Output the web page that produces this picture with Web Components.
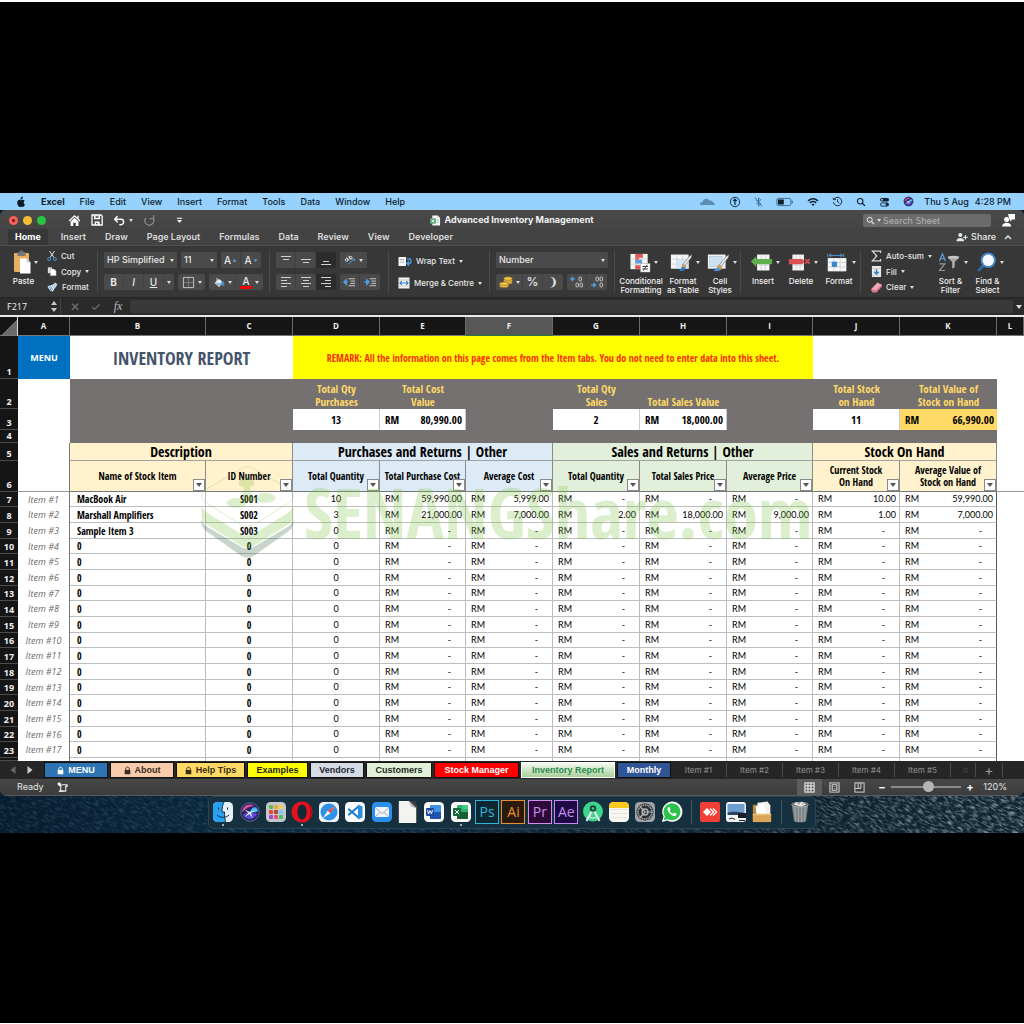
<!DOCTYPE html>
<html lang="en">
<head>
<meta charset="utf-8">
<title>Advanced Inventory Management</title>
<style>
  html { background: #fff; }
  body {
    margin: 0;
    --ui: Inter, "Liberation Sans", sans-serif;
    --cell: "Open Sans Condensed", "Liberation Sans Narrow", "Noto Sans", sans-serif;
    --num: Lato, "Open Sans", sans-serif;
    --head: "Open Sans", "Noto Sans", sans-serif;
    font-family: var(--ui);
    font-size: 9px;
    line-height: 12px;
  }
</style>
</head>
<body>
<desktop-stage>
  <mac-menubar></mac-menubar>
  <excel-window>
    <title-bar heading="Advanced Inventory Management"></title-bar>
    <ribbon-tabs></ribbon-tabs>
    <tool-ribbon></tool-ribbon>
    <formula-bar cell="F217"></formula-bar>
    <stock-sheet></stock-sheet>
    <sheet-tabs></sheet-tabs>
    <status-bar></status-bar>
  </excel-window>
  <mac-dock slot="dock"></mac-dock>
</desktop-stage>

<script>
const RESET = `
  *, *::before, *::after { box-sizing: border-box; }
  :host { display: block; font-family: var(--ui); }
  button, input, select { font: inherit; color: inherit; background: none; border: 0; padding: 0; margin: 0; border-radius: 0; appearance: none; outline: none; }
  button { display: inline-flex; align-items: center; justify-content: center; }
  a { color: inherit; text-decoration: none; }
`;
function define(name, css, html, after) {
  customElements.define(name, class extends HTMLElement {
    connectedCallback() {
      if (this.shadowRoot) return;
      const root = this.attachShadow({ mode: 'open' });
      root.innerHTML = `<style>${RESET}${css}</style>` + (typeof html === 'function' ? html(this) : html);
      if (after) after(root, this);
    }
  });
}

/* ---------- icon set: [viewBox, markup] ---------- */
const sheetGrid = (x, y, w, h) => `<rect x="${x}" y="${y}" width="${w}" height="${h}" fill="#f7f7f7"/><path d="M${x} ${y + h / 3}h${w}M${x} ${y + 2 * h / 3}h${w}M${x + w / 3} ${y}v${h}M${x + 2 * w / 3} ${y}v${h}" stroke="#c4c8cc" stroke-width=".8"/>`;
const lines = (a, c = '#d0d0d0') => `<path d="${a}" stroke="${c}" stroke-width="1" fill="none"/>`;
const tile = (bg, inner) => `<rect x="1" y="1" width="20" height="20" rx="4.5" fill="${bg}"/>${inner}`;
const ICONS = {
  apple: ['0 0 14 16', '<path fill="#0a1a2c" d="M9.3 3.6c.6-.8 1-1.800.9-2.800-.9.100-1.900.6-2.500 1.400-.6.7-1 1.700-.9 2.600 1 .1 1.900-.5 2.500-1.200zM11.300 8.500c0-1.500 1.200-2.200 1.300-2.300-.7-1.100-1.900-1.200-2.300-1.200-1-.1-1.900.6-2.400.6s-1.300-.6-2.100-.5C4.700 5.100 3.700 5.700 3.100 6.600c-1.100 2-.3 4.900.8 6.500.6.800 1.200 1.700 2 1.600.8 0 1.100-.5 2.100-.5s1.300.5 2.100.5c.9 0 1.500-.8 2-1.600.600-.9.900-1.800.9-1.800s-1.700-.700-1.700-2.800z"/>'],
  cloud: ['0 0 18 10', '<path fill="#5b8cb4" d="M1 9C0 6.500 2 5.500 3.500 5.500 4.500 1.500 9 .5 11 4c3-.6 4 1 4 2 2 0 2.500 2 2 3z"/>'],
  upcircle: ['0 0 12 12', '<g fill="none" stroke="#12324d" stroke-width="1"><circle cx="6" cy="6" r="4.700"/><path d="M6 9V3.200M4.200 5L6 3.200 7.800 5" stroke-width="1.300"/></g>'],
  bluetooth: ['0 0 10 12', '<path d="M2.500 3.500l5 5L5 10.500v-9L7.500 3.500l-5 5M1 1l8 10" fill="none" stroke="#3c6a90" stroke-width="1"/>'],
  battery: ['0 0 20 10', '<rect x="1" y="1" width="15.500" height="8" rx="1.800" fill="none" stroke="#2f5876" stroke-width=".9"/><rect x="2.200" y="2.200" width="6.500" height="5.600" fill="#10202f"/><path d="M18 3.500v3" stroke="#2f5876" stroke-width="1.200"/>'],
  wifi: ['0 0 14 11', '<g fill="none" stroke="#0e2235" stroke-width="1.700"><path d="M1.200 4.200Q7-.8 12.800 4.200M3.300 6.500Q7 3.500 10.700 6.500"/></g><path d="M5 8.200Q7 6.800 9 8.200L7 10.300z" fill="#0e2235"/>'],
  clock: ['0 0 12 12', '<path d="M2 3.800a4.600 4.600 0 1 1-.5 3M1.200 2l.8 2.200L4.200 3.700M6 3.500V6.300L8 7.500" fill="none" stroke="#0e2235" stroke-width="1"/>'],
  magnify: ['0 0 12 12', '<circle cx="5" cy="5" r="3.300" fill="none" stroke="currentColor" stroke-width="1.300"/><path d="M7.500 7.500L10.700 10.700" stroke="currentColor" stroke-width="1.500"/>'],
  control: ['0 0 12 11', '<rect x="1" y="1" width="10" height="4" rx="2" fill="#0e2235"/><circle cx="3.200" cy="3" r="1.100" fill="#97d0fc"/><rect x="1.500" y="6.500" width="9" height="3.500" rx="1.700" fill="none" stroke="#0e2235"/><circle cx="8.700" cy="8.200" r="1.500" fill="#0e2235"/>'],
  siri: ['0 0 22 22', '<circle cx="11" cy="11" r="9.700" fill="#26265c"/><circle cx="11" cy="11" r="9.300" fill="none" stroke="#6e7fae" stroke-width=".7"/><path d="M3 11C4 4 11 1.500 15 5c-4 0-8 2-12 6z" fill="#e0509a"/><path d="M19 10c-1-5-6-5-8 1 3 0 6 1 8-1z" fill="#4ab6f2"/><path d="M4 14c3-3 8-4 14-1-3 6-10 7-14 1z" fill="#5a4ed4"/><path d="M5 8.500l6 2.500 6-2-5 3 1.500 5-3-4-5 3 4-4z" fill="#fff" opacity=".9"/>'],
  home: ['0 0 14 14', '<path d="M1.200 7.500L7 2l5.800 5.500M10.800 2v3" fill="none" stroke="#fff" stroke-width="1.400"/><path d="M2.800 8L7 4.100 11.200 8v5H8.400V9.300H5.600V13H2.800z" fill="#fff"/>'],
  save: ['0 0 12 12', '<path d="M1 1h9l1.200 1.200V11H1z" fill="none" stroke="#fff" stroke-width="1.300"/><path d="M3 1.500h6v3.800H3zM3.600 7.500h5V11H6.500V9H5v2H3.600z" fill="#fff"/><path d="M4.500 2.200h3v1.500h-3z" fill="#3c3c3c"/>'],
  undo: ['0 0 14 12', '<path d="M5 1.200L1.700 4.600 5 8M2 4.600h6.500c4 0 4 6 0 6H6.800" fill="none" stroke="#fff" stroke-width="1.500"/>'],
  redo: ['0 0 14 14', '<path d="M3 4.200a4.800 4.800 0 1 0 7.800.3M11.500 1v4H7" fill="none" stroke="#8c8c8c" stroke-width="1.300"/>'],
  customise: ['0 0 8 8', '<path d="M1 1.500h6" stroke="#fff" stroke-width="1.200"/><path d="M1.200 3.500h5.600L4 6.800z" fill="#fff"/>'],
  doc: ['0 0 12 12', '<path d="M2.500.5h6L11 3v8.500H2.500z" fill="#f3f6f2"/><path d="M8.500.5V3H11z" fill="#bcc4bc"/><rect x="0" y="3.500" width="6.500" height="6" rx="1" fill="#5fa87c"/><path d="M2 5l2.600 3M4.600 5L2 8" stroke="#fff" stroke-width=".9"/><path d="M7.500 5.500h2M7.500 8h2" stroke="#8abf9d"/>'],
  presence: ['0 0 14 14', '<circle cx="5" cy="6" r="2.700" fill="#fff"/><path d="M0 13.500C0 8 10 8 10 13.500z" fill="#fff"/><path d="M6.500 0H14v6h-3L8.600 8V6H8z" fill="#fff"/>'],
  share: ['0 0 14 11', '<circle cx="5" cy="3.200" r="2.400" fill="#e8e8e8"/><path d="M.5 10.500C.5 5.500 9.500 5.500 9.500 10.500z" fill="#e8e8e8"/><path d="M11 3.500v5M8.500 6h5" stroke="#e8e8e8" stroke-width="1.300"/>'],
  chevron: ['0 0 8 6', '<path d="M1 5l3-3 3 3" fill="none" stroke="#eee" stroke-width="1.300"/>'],
  paste: ['0 0 18 24', '<rect x="1" y="3" width="15" height="19" rx="1.200" fill="#e8b062"/><path d="M4.500 2.200h2C6.500 0 10.500 0 10.500 2.200h2V6h-8z" fill="#74777b"/><path d="M7 8.500h6.500l4 4V23.500H7z" fill="#fff"/><path d="M13.500 8.500l4 4h-4z" fill="#cfcfcf"/>'],
  cut: ['0 0 12 14', '<path d="M3 1l5.500 8M9 1L3.500 9" stroke="#e6e6e6" stroke-width="1.200"/><g fill="none" stroke="#4a92d8" stroke-width="1.200"><circle cx="2.600" cy="10.700" r="1.800"/><circle cx="9.400" cy="10.700" r="1.800"/></g>'],
  copy: ['0 0 12 12', '<path d="M1 1h5v7H1z" fill="#ddd"/><path d="M4 3h4.500L11 5.500V11H4z" fill="#fff" stroke="#888" stroke-width=".4"/>'],
  brush: ['0 0 12 12', '<path d="M0 5l5-1.500 3.500 4-2 4C4 11.500 1 8 0 5z" fill="#f0f0f0"/><path d="M1.500 5.500l3.500 5M3.500 5l3 4.500" stroke="#4a92d8" stroke-width="1.200"/><path d="M5 4l4.500-3.500L12 3 8.500 8z" fill="#bcd6ee"/>'],
  growA: ['10 1 6 8', '<path d="M10.500 7l2.500-3.500L15.500 7z" fill="#4f9fe8"/>'],
  shrinkA: ['10 1 6 8', '<path d="M10.500 4h5L13 7.500z" fill="#4f9fe8"/>'],
  border: ['0 0 14 14', '<path d="M1.500 1.500h11v11h-11z" fill="none" stroke="#ccc" stroke-width="1"/><path d="M7 2v10M2 7h10" stroke="#888" stroke-width=".8"/>'],
  fillcolor: ['1 0 12 10', '<path d="M2.500 5.500L7 1.500 11.500 5 7 9.500z" fill="#eef2f6"/><path d="M2.500 5.500c2-.5 4 .5 9-.5L7 9.500z" fill="#9fb6c9"/><path d="M9.500 3c2.500 1 3.300 3 2.800 5.500-1.300 0-2.800-1-2.800-2z" fill="#3f8fdc"/><path d="M5 4V.5" stroke="#ddd"/>'],
  top: ['0 0 12 12', lines('M1 2.500h10M3 5.500h6')],
  middle: ['0 0 12 12', lines('M1 5.500h10M3 8.500h6')],
  bottom: ['0 0 12 12', lines('M3 7.500h6M1 10.500h10')],
  left: ['0 0 12 12', lines('M1 1.500h10M1 4.500h6M1 7.500h10M1 10.500h6')],
  center: ['0 0 12 12', lines('M1 1.500h10M3 4.500h6M1 7.500h10M3 10.500h6')],
  right: ['0 0 12 12', lines('M1 1.500h10M5 4.500h6M1 7.500h10M5 10.500h6')],
  outdent: ['0 0 14 10', lines('M6 1.500h7M8 4h5M8 6.500h5M6 9h7') + '<path d="M5 5H1.500M3.500 2.500L1 5l2.500 2.500z" stroke="#4f9fe8" stroke-width="1.400" fill="#4f9fe8"/>'],
  indent: ['0 0 14 10', lines('M6 1.500h7M8 4h5M8 6.500h5M6 9h7') + '<path d="M.5 5h3M3 2.500L5.500 5 3 7.500z" stroke="#4f9fe8" stroke-width="1.400" fill="#4f9fe8"/>'],
  orient: ['0 0 14 12', '<g fill="none" stroke="#eee" stroke-width="1"><circle cx="3.200" cy="6" r="1.600"/><path d="M3 3l3 3.500M5 1l3.500 4.200"/><circle cx="7.800" cy="3.300" r="1.600"/></g><path d="M5 11L12 5M12.300 4.500v3M12.300 4.800l-3 .2" stroke="#4f9fe8" stroke-width="1"/>'],
  wrap: ['0 0 14 10', '<path d="M.5.500H8V9.500H.5z" fill="#f8f8f8"/>' + lines('M2 3h4M2 5.500h4', '#aaa') + '<path d="M9 2.500h2.500c2 0 2 4.500 0 4.500H9.500M11 4.800L9 7l2 2" fill="none" stroke="#4f9fe8" stroke-width="1.300"/>'],
  merge: ['0 0 12 12', '<rect x=".5" y=".5" width="11" height="11" fill="#f5f5f5"/><path d="M.5 3h11M.5 9h11" stroke="#b6b6b6" stroke-width=".7"/><path d="M2 6h8M3.800 4.200L2 6l1.800 1.800M8.200 4.200L10 6 8.200 7.800" fill="none" stroke="#2f7fd2" stroke-width="1.200"/>'],
  coins: ['0 0 14 12', '<g fill="#efc04c" stroke="#8a6418" stroke-width=".5"><ellipse cx="9" cy="6.200" rx="4.300" ry="1.900"/><ellipse cx="9" cy="4.400" rx="4.300" ry="1.900"/><ellipse cx="9" cy="2.600" rx="4.300" ry="1.900"/><ellipse cx="5" cy="9.700" rx="4.500" ry="1.900"/><ellipse cx="5" cy="7.800" rx="4.500" ry="1.900"/></g>'],
  decinc: ['0 0 14 12', '<path d="M1 3h4M3 1L1 3l2 2" fill="none" stroke="#4f9fe8" stroke-width="1.400"/><g fill="none" stroke="#ccc" stroke-width=".9"><rect x="9" y="1" width="2.500" height="4" rx="1"/><rect x="6" y="7" width="2.500" height="4" rx="1"/><rect x="10" y="7" width="2.500" height="4" rx="1"/></g>'],
  decdec: ['0 0 14 12', '<path d="M1 9h4M3.500 7l2 2-2 2" fill="none" stroke="#4f9fe8" stroke-width="1.400"/><g fill="none" stroke="#ccc" stroke-width=".9"><rect x="10" y="7" width="2.500" height="4" rx="1"/><rect x="6" y="1" width="2.500" height="4" rx="1"/><rect x="10" y="1" width="2.500" height="4" rx="1"/></g>'],
  cond: ['0 0 22 22', sheetGrid(1, 2, 18, 16) + '<path d="M6 2h8v4H6zM6 14h6v4H6z" fill="#e0565b"/><path d="M6 8h7v4H6z" fill="#5b9be0"/><path d="M6 6h4v2H6z" fill="#e0565b"/><rect x="11.500" y="12" width="10" height="9" fill="#fff" stroke="#999" stroke-width=".5"/><path d="M13.500 15.200h6M13.500 17.800h6M18.500 13.500l-4 6" stroke="#333" stroke-width="1"/>'],
  astable: ['0 0 26 22', sheetGrid(1, 2, 20, 16) + '<path d="M7 8h14v10H7z" fill="#d4e4f4"/><path d="M14 14l8-10 3-2-1 3.500-8 10z" fill="#eee" stroke="#555" stroke-width=".6"/><path d="M15.500 14.500l2.500 2.500c-1 3-4 4-8 3.500 2.500-1 2.500-4.500 5.500-6z" fill="#2f7fd2"/><path d="M14.500 13.500l3 3" stroke="#d89a40" stroke-width="2.500"/>'],
  styles: ['0 0 26 22', '<rect x="1" y="2" width="20" height="16" fill="#f1f4f8"/><rect x="3" y="4" width="14" height="12" fill="#cfe0f2" stroke="#8aa" stroke-width=".4"/><path d="M14 14l8-10 3-2-1 3.500-8 10z" fill="#eee" stroke="#555" stroke-width=".6"/><path d="M13.500 15l3 3c-1 2.500-5 3-9.500 2.500 3-1 3.500-4 6.500-5.500z" fill="#4d96df"/><path d="M12.500 14l4 4" stroke="#d89a40" stroke-width="3"/>'],
  insert: ['0 0 26 22', sheetGrid(8, 2, 14, 18) + '<path d="M7 7h18v6H7v3L1 10l6-6z" fill="#5eb04f"/>'],
  remove: ['0 0 26 22', sheetGrid(5, 2, 13, 18) + '<path d="M1 7h15l3 3-3 3H1z" fill="#dc4f50"/><path d="M19.500 7l5 5.500M24.500 7l-5 5.500" stroke="#dc4f50" stroke-width="1.800"/>'],
  cellfmt: ['0 0 26 22', sheetGrid(2, 6, 21, 15) + '<rect x="6.500" y="10" width="6" height="6" fill="#3f86d2"/><path d="M2 1v4M20 1v4M3.500 3h15M6 1L3.500 3 6 5M16 1l2.500 2L16 5" fill="none" stroke="#5a9fe0" stroke-width="1"/>'],
  sigma: ['0 0 12 13', '<path d="M10.500 3.300V1.200H1.500L6.300 6.500 1.500 11.800h9V9.700" fill="none" stroke="#ddd" stroke-width="1.300"/>'],
  filldown: ['0 0 12 12', '<rect x="1" y="0" width="10" height="12" fill="#eee"/><path d="M1 2.500h10M1 10h10" stroke="#aaa" stroke-width=".6"/><path d="M6 3.500v5M3.500 6.300L6 8.800l2.500-2.500" fill="none" stroke="#2f7fd2" stroke-width="1.600"/>'],
  eraser: ['0 0 12 12', '<path d="M0 8l7-7.500 5 2.500L6 11H2z" fill="#f3a5b6"/><path d="M0 8l5.500 1L12 3v2L6 11.500H1.500z" fill="#d9748c"/>'],
  sort: ['0 0 26 22', '<path d="M1.500 9.500L5 1l3.500 8.500M2.700 6.800h4.600" fill="none" stroke="#5fa2e4" stroke-width="1.300"/><path d="M1.800 12.500h6l-6 7.500h6.300" fill="none" stroke="#9a9a9a" stroke-width="1.300"/><path d="M11 4.500h13c0 3-5 4-5 7v5l-3 1.500v-6.500c0-3-5-4-5-7z" fill="#a8a8a8"/><ellipse cx="17.500" cy="5" rx="6.500" ry="1.600" fill="#c8c8c8"/>'],
  find: ['0 0 24 24', '<path d="M9 15l-6.500 6.500" stroke="#2f6faf" stroke-width="3"/><circle cx="14" cy="9.500" r="7.700" fill="#f5f9fc" stroke="#3f86c4" stroke-width="2.200"/>'],
  lock: ['0 0 8 10', '<path d="M2 5V3.200C2 .5 6 .5 6 3.200V5" fill="none" stroke="currentColor" stroke-width="1.100"/><rect x=".8" y="4.500" width="6.400" height="4.800" rx=".6" fill="currentColor"/>'],
  prev: ['0 0 6 8', '<path d="M5.500 0v8L.5 4z" fill="#666"/>'],
  next: ['0 0 6 8', '<path d="M.5 0v8l5-4z" fill="#ccc"/>'],
  macro: ['0 0 12 12', '<path d="M5 3h6v1.800H9.500V10H2.500" fill="none" stroke="#eee" stroke-width="1.200"/><path d="M4 1.500V10M2 4h3M2 10h5" stroke="#eee" stroke-width="1.200"/><circle cx="2.200" cy="2.200" r="1.600" fill="#fff"/>'],
  normal: ['0 0 12 12', '<rect x="1" y="1" width="10" height="10" fill="none" stroke="#fff"/><path d="M1 4.300h10M1 7.600h10M4.300 1v10M7.600 1v10" stroke="#fff" stroke-width="1"/>'],
  layout: ['0 0 12 12', '<rect x="1" y="1" width="10" height="10" fill="none" stroke="#ddd"/><rect x="3.500" y="3" width="5" height="6" fill="none" stroke="#ddd"/><path d="M2 3v6M10 3v6M5 5h2M5 7h2" stroke="#999"/>'],
  breaks: ['0 0 12 12', '<rect x="1" y="1" width="10" height="10" fill="none" stroke="#ddd"/><path d="M1 7h6.500V1M4.500 1v6" fill="none" stroke="#ddd"/>'],
  finder: ['0 0 22 22', tile('#e4eff8', '<path d="M5.500 1H12c-1.500 3-2 6-2 10h2.500c0 4 .2 7 1 10H5.500A4.500 4.500 0 0 1 1 16.500v-11A4.500 4.500 0 0 1 5.500 1z" fill="#29a0f0"/><path d="M6.500 6.500v2.300M15.500 6.500v2.300M5 14c3.500 3.200 8.500 3.200 12 0M12 1c-1.500 3-2 6-2 10h2.500c0 4 .2 7 1 10" fill="none" stroke="#14304c" stroke-width="1"/>')],
  launchpad: ['0 0 22 22', tile('#c3c8cc', [['#5cc04e', 4, 4], ['#f0a63c', 9, 4], ['#f2d14a', 14, 4], ['#e8453c', 4, 9], ['#b9442e', 9, 9], ['#7fcaf0', 14, 9], ['#a24bd0', 4, 14], ['#ea4b78', 9, 14], ['#46bf5e', 14, 14]].map(c => `<rect x="${c[1]}" y="${c[2]}" width="4" height="4" rx=".8" fill="${c[0]}"/>`).join(''))],
  opera: ['0 0 24 24', '<circle cx="12" cy="12" r="11.500" fill="#e3121f"/><ellipse cx="12" cy="12" rx="5" ry="8.300" fill="#12293a"/><path d="M18 2.500a11.500 11.500 0 0 1 0 19c4-4 4-15 0-19z" fill="#a8101a"/>'],
  safari: ['0 0 22 22', tile('#f1f4f6', '<circle cx="11" cy="11" r="8.500" fill="#2f92ea"/><path d="M17 5l-4.700 7.300L5 17l4.700-7.300z" fill="#fff"/><path d="M17 5L9.700 9.700l2.600 2.600z" fill="#e8443a"/>')],
  vscode: ['0 0 22 22', tile('#fdfdfd', '<path d="M14.500 5.500L5 13.500M14.500 16.500L5 8.500" stroke="#1f7fc8" stroke-width="2.200" stroke-linecap="round"/><path d="M14 3.500l4.500 2v11l-4.500 2z" fill="#2a8fdc"/>')],
  mail: ['0 0 22 22', tile('#2b8ff0', '<rect x="4" y="6" width="14" height="10" rx="1.500" fill="#f1f5f8"/><path d="M4.500 7l6.500 5.500L17.500 7M4.500 15.500l4.500-4M17.500 15.500l-4.500-4" fill="none" stroke="#98a4ae" stroke-width=".9"/>')],
  libre: ['0 0 22 24', '<path d="M1 0h13l6 6v18H1z" fill="#f3f3f2"/><path d="M12 0h8v8z" fill="#3a3e42"/><path d="M12 0l2 6 6 2z" fill="#b9bcbe"/>'],
  word: ['0 0 22 22', tile('#fafafa', '<rect x="7" y="4" width="11" height="14" rx="1" fill="#3f93e0"/><path d="M7 11h11v6a1 1 0 0 1-1 1H7z" fill="#1d55ad"/><rect x="3" y="7" width="8" height="8" rx="1" fill="#1a4b9e"/><path d="M4.500 9l1 4L7 9.500 8.500 13l1-4" fill="none" stroke="#fff" stroke-width=".9"/>')],
  excel: ['0 0 22 22', tile('#fafafa', '<rect x="7" y="4" width="11" height="14" rx="1" fill="#2fb070"/><path d="M7 11h11v6a1 1 0 0 1-1 1H7z" fill="#17613a"/><path d="M12.500 4H17a1 1 0 0 1 1 1v3h-5.500z" fill="#42cf8a"/><rect x="3" y="7" width="8" height="8" rx="1" fill="#14683b"/><path d="M5 9l4 4M9 9l-4 4" fill="none" stroke="#fff" stroke-width="1"/>')],
  studio: ['0 0 22 22', '<circle cx="11" cy="10.500" r="10" fill="#3dd58a"/><path d="M11 8L4.500 20M11 8l6.500 12" stroke="#e8eef2" stroke-width="2"/><path d="M6 15c3 2.500 7 2.500 10 0" fill="none" stroke="#dfe7ec" stroke-width="1.300"/><circle cx="11" cy="7.500" r="3.300" fill="#1b4a48"/><circle cx="11" cy="7.500" r="1.200" fill="#3dd58a"/>'],
  notes: ['0 0 22 22', tile('#f7f6f1', '<path d="M5.500 1h11A4.500 4.500 0 0 1 21 5.500V7H1V5.500A4.500 4.500 0 0 1 5.500 1z" fill="#fbc81f"/><path d="M1 8.500h20M3 12.500h16M3 16.500h16" stroke="#d4d2ca" stroke-width=".5"/>')],
  prefs: ['0 0 22 22', tile('#9ea3a7', '<circle cx="11" cy="11" r="8.500" fill="#2b2e31"/><circle cx="11" cy="11" r="7" fill="none" stroke="#a9adb0" stroke-width="1.600" stroke-dasharray="1.200 .6"/><circle cx="11" cy="11" r="3" fill="none" stroke="#b4b8bb" stroke-width="1.300"/><path d="M11 11L6 5.500M11 11h7.500M11 11l-5 5.500" stroke="#b4b8bb" stroke-width="1.200"/>')],
  whatsapp: ['0 0 24 24', '<path d="M1 23l1.700-6A11 11 0 1 1 7 21.300z" fill="#fff"/><path d="M3 21l1.200-4.300A9.200 9.200 0 1 1 7.500 19.800z" fill="#2cc24b"/><path d="M8.300 6.500c-2 1-1.500 4 1.500 7s6 3.800 7 1.800c.4-1-.3-1.500-2.300-2.400-1 .2-1 1.300-1.800 1-1.700-.8-2.500-1.800-3.200-3.200.2-.8 1-.9.7-1.900-.6-1.500-.9-2.400-1.900-2.300z" fill="#fff"/>'],
  anydesk: ['0 0 22 22', '<rect x="1" y="1" width="20" height="20" rx="2" fill="#ee4035"/><path d="M8 7l4 4-4 4-4-4z" fill="#fff"/><path d="M11 7.500l3.500 3.500-3.500 3.500M14 7.500l3.500 3.500-3.500 3.500" fill="none" stroke="#fff" stroke-width="1.300"/>'],
  photos: ['0 0 22 22', '<rect x="1" y="1" width="20" height="20" rx="3" fill="#f2f5f7"/><rect x="2.500" y="3" width="17" height="9" fill="#6d9fd2"/><path d="M2.500 12c4-2 9-1 17 0v2h-17z" fill="#2d4560"/><rect x="13" y="12" width="8" height="5" fill="#1c1f22"/><path d="M4 18l3-1 3 1.500M14 19.500h6" stroke="#222"/>'],
  folder: ['0 0 22 24', '<path d="M1 4h8l1 2h10v16H1z" fill="#b98a43"/><path d="M6 2l11-1.500 3 4V15H6z" fill="#f2f2ef"/><path d="M4 6l9-3 3 12H5z" fill="#fff"/><path d="M1 14h20v9H1z" fill="#dba756"/><path d="M1 14h20v1.500H1z" fill="#ecc27b"/>'],
  trash: ['0 0 22 24', '<path d="M2 3.500h18L17.500 22c-2 1.500-11 1.500-13 0z" fill="#7f8487"/><path d="M5 5l1.500 17M9 5.500L9.500 23M13 5.500L12.500 23M17 5l-1.500 17" stroke="#a9aeb1" stroke-width=".9"/><ellipse cx="11" cy="4" rx="9" ry="2.500" fill="#4b5053" stroke="#c3c7c9" stroke-width=".8"/><path d="M4 4l3-3 3 2 3-2.500L18 4l-6 2z" fill="#e9ecec"/><path d="M8 2l2 2M13 2l1 2" stroke="#a33" stroke-width=".7"/>']
};
define('ui-icon', ':host{display:inline-block;flex:none;width:var(--w,12px);height:var(--h,12px)}svg{display:block;width:100%;height:100%}',
  el => { const i = ICONS[el.getAttribute('name')]; return `<svg viewBox="${i[0]}" fill="none" aria-hidden="true">${i[1]}</svg>`; });
const icon = (n, w = 12, h = 12) => `<ui-icon name="${n}" style="--w:${w}px;--h:${h}px"></ui-icon>`;
const CARET = '.caret{display:inline-block;flex:none;width:0;height:0;border:2px solid transparent;border-top:3px solid #ddd;border-bottom:0;}';
const caret = '<span class="caret"></span>';

/* ---------- stage: letterboxed desktop ---------- */
define('desktop-stage', `
  :host { padding: 2px 0 1px; background: #fff; }
  .frame { background: #000; padding: 191px 0 190px; }
  .screen { position: relative; background: #0b2538; overflow: hidden; }
  .sea { display: block; width: 100%; height: 37px; position: relative; }
  .sea svg { display: block; width: 100%; height: 37px; }
  .dock { position: absolute; inset: 0; display: flex; justify-content: center; align-items: flex-start; }
  .sky { background: #0b2336; }
`, `<div class="frame"><div class="screen"><div class="sky"><slot></slot></div>
  <div class="sea"><svg preserveAspectRatio="none" viewBox="0 0 1024 37">
    <defs>
      <linearGradient id="g"><stop offset="0" stop-color="#071c30"/><stop offset=".25" stop-color="#0a2940"/><stop offset=".8" stop-color="#10222f"/><stop offset="1" stop-color="#132632"/></linearGradient>
      <filter id="n" x="0" y="0" width="1" height="1"><feTurbulence type="fractalNoise" baseFrequency=".16 .6" numOctaves="3" seed="4"/><feColorMatrix values="0 0 0 0 .3  0 0 0 0 .42  0 0 0 0 .5  2.400 0 0 0 -1.050"/></filter>
      <linearGradient id="m"><stop offset="0" stop-color="#3a3a3a"/><stop offset=".6" stop-color="#555"/><stop offset="1" stop-color="#fff"/></linearGradient>
      <mask id="k"><rect width="1024" height="37" fill="url(#m)"/></mask>
    </defs>
    <rect width="1024" height="37" fill="url(#g)"/>
    <g mask="url(#k)"><rect x="-200" y="-400" width="1500" height="840" transform="rotate(28 512 18)" filter="url(#n)"/></g>
  </svg><div class="dock"><slot name="dock"></slot></div></div></div></div>`);

/* ---------- macOS menu bar ---------- */
define('mac-menubar', `
  :host { background: #97d2ff; color: #0c1c2b; height: 17px; font-size: 9px; font-weight: 500; }
  nav { display: flex; align-items: center; height: 17px; padding: 0 13px 0 15px; }
  ul { display: flex; list-style: none; margin: 0; padding: 0 0 0 15px; gap: 15px; }
  li:first-child { font-weight: 700; }
  .tray { margin-left: auto; display: flex; align-items: center; gap: 13px; }
  .time { display: flex; gap: 6px; margin-left: -3px; white-space: nowrap; }
`, `<nav>${icon('apple', 11, 12)}<ul>${['Excel', 'File', 'Edit', 'View', 'Insert', 'Format', 'Tools', 'Data', 'Window', 'Help'].map(t => `<li><a href="#">${t}</a></li>`).join('')}</ul>
  <div class="tray">${icon('cloud', 17, 9)}${icon('upcircle', 12, 12)}${icon('bluetooth', 9, 12)}${icon('battery', 18, 10)}${icon('wifi', 12, 10)}${icon('clock', 11, 11)}${icon('magnify', 10, 10)}${icon('control', 11, 10)}${icon('siri', 11, 11)}
  <span class="time"><span>Thu 5 Aug</span><span>4:28 PM</span></span></div></nav>`);

/* ---------- Excel window ---------- */
define('excel-window', `:host { background: #3a3a3a; color: #e8e8e8; border-radius: 6px 6px 7px 7px; overflow: hidden; }`, '<slot></slot>');

define('title-bar', `
  :host { background: linear-gradient(#4a4a4a, #444); }
  header { display: grid; grid-template-columns: 1fr auto 1fr; align-items: center; height: 19px; padding: 1px 9px 0 9px; }
  .side { display: flex; align-items: center; }
  .lights { display: flex; gap: 5px; padding-right: 22px; }
  .lights button { width: 9px; height: 9px; border-radius: 50%; }
  .r { background: radial-gradient(circle, #7a1510 0 1px, #f4605a 2px); } .y { background: #f5bd2f; } .g { background: #29c440; }
  .quick { display: flex; align-items: center; gap: 10px; }
  h1 { display: flex; align-items: center; gap: 3px; margin: 0; font-size: 9px; font-weight: 700; color: #f2f2f2; }
  .end { justify-content: flex-end; gap: 11px; }
  .search { display: flex; align-items: center; width: 128px; height: 13px; background: #6b6b6b; border-radius: 2px; padding-left: 3px; gap: 2px; color: #eee; }
  input { flex: 1; min-width: 0; font-size: 9px; height: 13px; }
  input::placeholder { color: #b4b4b4; opacity: 1; }
  ${CARET}
`, el => `<header><div class="side"><div class="lights"><button class="r" aria-label="Close"></button><button class="y" aria-label="Minimise"></button><button class="g" aria-label="Zoom"></button></div>
  <div class="quick"><button aria-label="Home">${icon('home', 13, 13)}</button><button aria-label="Save">${icon('save', 12, 12)}</button><button aria-label="Undo">${icon('undo', 13, 11)}<span style="width:3px"></span>${caret}</button><button aria-label="Redo">${icon('redo', 13, 13)}</button><span></span><button aria-label="Customise toolbar">${icon('customise', 7, 7)}</button></div></div>
  <h1>${icon('doc', 11, 11)}${el.getAttribute('heading')}</h1>
  <div class="side end"><label class="search">${icon('magnify', 9, 9)}${caret}<input type="search" aria-label="Search Sheet" placeholder="Search Sheet"></label><button aria-label="Presence">${icon('presence', 13, 13)}</button></div></header>`);

define('ribbon-tabs', `
  :host { background: #434343; }
  div { display: flex; align-items: flex-end; height: 17px; padding: 0 12px 0 8px; border-bottom: 1px solid #505050; }
  nav { display: flex; gap: 19px; align-items: center; white-space: nowrap; font-size: 9px; font-weight: 600; color: #dcdcdc; }
  a[aria-current] { background: #373737; color: #fff; padding: 2px 7px; margin: 0 -6px 0 0; font-weight: 700; border-radius: 2px 2px 0 0; line-height: 12px; }
  .end { margin-left: auto; display: flex; align-items: center; gap: 8px; border: 0; padding: 0; }
  .end button { gap: 3px; font-weight: 500; }
`, `<div><nav><a href="#" aria-current="page">Home</a>${['Insert', 'Draw', 'Page Layout', 'Formulas', 'Data', 'Review', 'View', 'Developer'].map(t => `<a href="#">${t}</a>`).join('')}</nav>
  <div class="end"><button>${icon('share', 12, 10)}Share</button><button aria-label="Collapse ribbon">${icon('chevron', 8, 6)}</button></div></div>`);

/* ---------- ribbon ---------- */
define('ribbon-button', `
  :host { flex: var(--n) 1 calc(var(--n) * 1px); min-width: 0; }
  button { display: flex; flex-direction: column; width: 100%; justify-content: flex-start; font-size: 8px; line-height: 9px; font-weight: 500; color: #f0f0f0; }
  .pic { display: flex; align-items: center; gap: 3px; height: 24px; margin-bottom: 3px; padding-left: 4px; }
  ${CARET}
`, el => { const n = el.getAttribute('icon'), w = n === 'paste' ? 18 : n === 'cond' ? 22 : n === 'find' ? 21 : 23; return `<button><span class="pic">${icon(n, w, n === 'paste' ? 24 : 21)}${caret}</span><slot></slot></button>`; });

define('tool-ribbon', `
  :host { background: #373737; border-bottom: 1px solid #252525; font-size: 8px; font-weight: 500; }
  .ribbon { display: flex; height: 51px; padding: 4px 0; }
  .group { flex: var(--n) 1 calc(var(--n) * 1px); min-width: 0; display: flex; padding-left: 6px; border-left: 1px solid #4a4a4a; }
  .group:first-child { border: 0; padding-left: 0; }
  .stack { display: flex; flex-direction: column; justify-content: space-between; align-items: flex-start; }
  .stack button { gap: 4px; height: 12px; white-space: nowrap; }
  .rows { display: flex; flex-direction: column; gap: 6px; padding-top: 2px; }
  .row { display: flex; gap: 4px; height: 16px; }
  .seg { display: flex; background: #4a4a4a; border-radius: 2px; height: 16px; overflow: hidden; }
  .seg button { width: 20px; gap: 1px; border-right: 1px solid #414141; font-size: 10px; }
  .seg button.wide { width: 27px; gap: 3px; } .seg button.drop { width: 10px; }
  .seg button:last-child { border: 0; }
  .seg button[aria-pressed="true"] { background: #2c2c2c; }
  .pick { position: relative; display: flex; background: #4a4a4a; border-radius: 2px; height: 16px; }
  .pick .caret { position: absolute; right: 3px; top: 7px; pointer-events: none; }
  select { width: 100%; padding: 0 8px 0 3px; font-size: 9px; height: 16px; }
  .fc { border-bottom: 3px solid #e00; line-height: 10px; padding: 0 2px; border-radius: 1px; }
  .big { display: flex; width: 100%; }
  .group.open { padding-left: 1px; }
  ${CARET}
`, `<div class="ribbon">
  <div class="group" style="--n:97"><ribbon-button icon="paste" style="--n:47">Paste</ribbon-button><div class="stack" style="width:50px"><button>${icon('cut', 10, 12)}Cut</button><button>${icon('copy', 10, 11)}Copy ${caret}</button><button>${icon('brush', 11, 10)}Format</button></div></div>
  <div class="group" style="--n:172"><div class="rows">
    <div class="row"><label class="pick" style="width:73px"><select aria-label="Font"><option>HP Simplified</option></select>${caret}</label><label class="pick" style="width:36px"><select aria-label="Font size"><option>11</option></select>${caret}</label><span class="seg"><button aria-label="Increase font size">A${icon('growA', 5, 8)}</button><button aria-label="Decrease font size">A${icon('shrinkA', 5, 8)}</button></span></div>
    <div class="row"><span class="seg"><button><b>B</b></button><button><i>I</i></button><button><u>U</u></button><button class="drop" aria-label="Underline style">${caret}</button></span><span class="seg"><button class="wide" aria-label="Borders">${icon('border', 13, 13)}${caret}</button></span><span class="seg"><button class="wide" aria-label="Fill colour">${icon('fillcolor', 12, 11)}${caret}</button><button class="wide" aria-label="Font colour"><span class="fc">A</span>${caret}</button></span></div></div></div>
  <div class="group" style="--n:119"><div class="rows">
    <div class="row"><span class="seg"><button aria-label="Top">${icon('top')}</button><button aria-label="Middle">${icon('middle')}</button><button aria-label="Bottom" aria-pressed="true">${icon('bottom')}</button></span><span class="seg"><button class="wide" aria-label="Orientation">${icon('orient')}${caret}</button></span></div>
    <div class="row"><span class="seg"><button aria-label="Left">${icon('left')}</button><button aria-label="Centre">${icon('center')}</button><button aria-label="Right" aria-pressed="true">${icon('right')}</button></span><span class="seg"><button aria-label="Decrease indent">${icon('outdent', 13, 10)}</button><button aria-label="Increase indent">${icon('indent', 13, 10)}</button></span></div></div></div>
  <div class="group" style="--n:101"><div class="stack" style="padding:5px 3px 4px"><button>${icon('wrap', 14, 11)}Wrap Text ${caret}</button><button>${icon('merge', 12, 12)}Merge &amp; Centre ${caret}</button></div></div>
  <div class="group" style="--n:125"><div class="rows">
    <div class="row"><label class="pick" style="width:112px"><select aria-label="Number format"><option>Number</option></select>${caret}</label></div>
    <div class="row"><span class="seg"><button class="wide" aria-label="Currency">${icon('coins', 14, 12)}${caret}</button><button aria-label="Percent" style="font-size:12px">%</button><button aria-label="Comma" style="font-size:12px">❩</button></span><span class="seg"><button aria-label="Increase decimal">${icon('decinc', 14, 12)}</button><button aria-label="Decrease decimal">${icon('decdec', 14, 12)}</button></span></div></div></div>
  <div class="group open" style="--n:126"><div class="big"><ribbon-button icon="cond" style="--n:50">Conditional Formatting</ribbon-button><ribbon-button icon="astable" style="--n:34">Format<br>as Table</ribbon-button><ribbon-button icon="styles" style="--n:40">Cell<br>Styles</ribbon-button></div></div>
  <div class="group open" style="--n:120"><div class="big"><ribbon-button icon="insert" style="--n:42">Insert</ribbon-button><ribbon-button icon="remove" style="--n:34">Delete</ribbon-button><ribbon-button icon="cellfmt" style="--n:42">Format</ribbon-button></div></div>
  <div class="group" style="--n:164;padding-left:10px"><div class="stack" style="width:61px"><button>${icon('sigma', 11, 12)}Auto-sum ${caret}</button><button>${icon('filldown', 11, 11)}Fill ${caret}</button><button>${icon('eraser', 11, 11)}Clear ${caret}</button></div><div class="big" style="width:74px"><ribbon-button icon="sort" style="--n:37">Sort &amp;<br>Filter</ribbon-button><ribbon-button icon="find" style="--n:37">Find &amp;<br>Select</ribbon-button></div></div>
</div>`);

define('formula-bar', `
  :host { background: #2b2b2b; border-bottom: 2px solid #e9e9e9; }
  div { display: flex; align-items: center; height: 17px; color: #eee; }
  .name { width: 48px; padding-left: 7px; font: 500 9px var(--head); height: 17px; }
  .step { display: flex; flex-direction: column; gap: 3px; width: 13px; align-items: center; border-right: 1px solid #444; height: 17px; justify-content: center; }
  .step i { border: 3px solid transparent; border-top: 0; border-bottom: 4px solid #ccc; } .step i + i { border-bottom: 0; border-top: 4px solid #ccc; }
  button { width: 21px; color: #777; font-size: 12px; }
  .fx { font: italic 12px "Liberation Serif", serif; color: #bbb; width: 24px; }
  .f { flex: 1; min-width: 0; height: 13px; background: #393939; border-radius: 2px; }
  .caret { border: 3px solid transparent; border-top: 4px solid #ddd; border-bottom: 0; margin: 0 2px 0 3px; }
`, el => `<div><input class="name" aria-label="Name box" value="${el.getAttribute('cell')}"><span class="step"><i></i><i></i></span><span style="width:3px"></span><button aria-label="Cancel">✕</button><button aria-label="Enter">✓</button><button class="fx">fx</button><input class="f" aria-label="Formula"><span class="caret"></span></div>`);

/* ---------- worksheet ---------- */
const COLS = [18, 52, 136, 87, 87, 86, 87, 87, 87, 86, 87, 97, 27];
const rm = (v, cls = '') => `<td class="${cls}"><div class="acc"><span>RM</span><span class="${v === '-' ? 'dash' : ''}">${v}</span></div></td>`;
const DATA = [
  ['MacBook Air', 'S001', '10', '59,990.00', '5,999.00', '-', '-', '-', '10.00', '59,990.00'],
  ['Marshall Amplifiers', 'S002', '3', '21,000.00', '7,000.00', '2.00', '18,000.00', '9,000.00', '1.00', '7,000.00'],
  ['Sample Item 3', 'S003', '0', '-', '-', '-', '-', '-', '-', '-']
];
while (DATA.length < 17) DATA.push(['0', '0', '0', '-', '-', '-', '-', '-', '-', '-']);
const flt = '<button class="flt" aria-label="Filter"></button>';
define('stock-sheet', `
  :host { position: relative; background: #fff; color: #000; font-family: var(--cell); overflow: hidden; }
  table { width: 100%; table-layout: fixed; border-collapse: separate; border-spacing: 0; font-size: 10px; line-height: 12px; }
  td, th { padding: 0; overflow: hidden; white-space: nowrap; font-weight: 400; position: relative; }
  .n { background: #151515; color: #f0f0f0; font: 700 9px/12px var(--head); vertical-align: bottom; border-bottom: 1px solid #4c4c4c; text-align: center; }
  thead th { height: 19px; background: #151515; color: #eee; font: 700 8px/12px var(--head); border-right: 1px solid #6a6a6a; border-bottom: 1px solid #777; }
  thead th.sel { background: #575757; border-bottom-color: #1f7a3c; }
  thead th:first-child { background: linear-gradient(135deg, #151515 55%, #6a6a6a 56%); border-right: 1px solid #ddd; }
  .r1 { height: 43px; } .r2 { height: 30px; } .r3 { height: 21px; } .r4 { height: 13px; } .r5 { height: 18px; } .r6 { height: 31px; }
  .menu { background: #0070c0; color: #fff; font: 700 9px/12px var(--head); text-align: center; }
  .menu a { color: inherit; text-decoration: none; }
  .title { color: #44546a; font-size: 18px; line-height: 20px; font-weight: 700; text-align: center; }
  .remark { background: #ff0; color: #f8300c; font-size: 10px; font-weight: 700; text-align: center; }
  .g { background: #767171; color: #ffd966; font-size: 11px; font-weight: 700; text-align: center; vertical-align: bottom; line-height: 13px; padding-bottom: 1px; white-space: normal; }
  .w { background: #fff; font-size: 11px; font-weight: 700; text-align: center; border-right: 1px solid #ccc; } .k { background: #ffd966; font-size: 11px; font-weight: 700; }
  .acc { display: flex; justify-content: space-between; padding: 0 3px 0 5px; } .dash { padding-right: 11px; }
  .h5 { font-size: 14px; line-height: 16px; font-weight: 700; text-align: center; border-right: 1px solid #8a8a8a; border-bottom: 1px solid #a0a0a0; }
  .h6 { font-weight: 700; text-align: center; border-right: 1px solid #8a8a8a; border-bottom: 1px solid #777; white-space: normal; }
  .cr { background: #fff2cc; } .bl { background: #ddebf7; } .gr { background: #e2efda; }
  .flt { position: absolute; right: 0; bottom: 0; width: 12px; height: 12px; background: #fff; border: 1px solid #8a8a8a; }
  .flt::after { content: ""; border: 3px solid transparent; border-top: 4px solid #555; border-bottom: 0; }
  .a { color: #6c6c6c; font: italic 9px/12px var(--head); text-align: center; border-right: 1px solid #777; }
  .r6 .a, .r6 .out { border-bottom: 1px solid #999; }
  tbody.data tr { height: 16px; } tbody.data tr:nth-child(3n+1) { height: 15px; }
  tbody.data td { border-right: 1px solid #bdbdbd; border-bottom: 1px solid #bdbdbd; }
  tbody.data td:not(.a, .b) { font-family: var(--num); font-size: 9px; }
  tbody.data td.a { border-bottom: 0; border-right-color: #777; } tbody.data td.out { border: 0; }
  tbody.data td:nth-last-child(2) { border-right-color: #555; }
  .name { padding-left: 7px; } .c { text-align: center; } .b { font-weight: 700; }
  tbody.data tr.cut { height: 3px; } .cut td, .cut th { height: 3px; line-height: 0; font-size: 0; } tbody.data .cut td { border-bottom: 0; }
  .mark { position: absolute; left: 0; top: 148px; width: 100%; padding-left: 200px; display: flex; align-items: center; gap: 9px; pointer-events: none; color: #7cc242; opacity: .26; }
  .mark svg { width: 95px; height: 94px; flex: none; }
  .mark span { font-size: 70px; line-height: 72px; font-weight: 700; white-space: nowrap; }
`, () => `<table>
  <colgroup>${COLS.map(w => `<col style="width:${w}px">`).join('')}</colgroup>
  <thead><tr><th aria-label="Select all"></th>${'ABCDEFGHIJKL'.split('').map(c => `<th${c === 'F' ? ' class="sel"' : ''} scope="col">${c}</th>`).join('')}</tr></thead>
  <tbody>
  <tr class="r1"><th class="n">1</th><td class="menu"><a href="#">MENU</a></td><td colspan="2" class="title">INVENTORY REPORT</td><td colspan="6" class="remark">REMARK: All the information on this page comes from the Item tabs. You do not need to enter data into this sheet.</td><td></td><td></td><td></td></tr>
  <tr class="r2"><th class="n">2</th><td></td><td class="g"></td><td class="g"></td><td class="g">Total Qty<br>Purchases</td><td class="g">Total Cost<br>Value</td><td class="g"></td><td class="g">Total Qty<br>Sales</td><td class="g">Total Sales Value</td><td class="g"></td><td class="g">Total Stock<br>on Hand</td><td class="g">Total Value of<br>Stock on Hand</td><td></td></tr>
  <tr class="r3"><th class="n">3</th><td></td><td class="g"></td><td class="g"></td><td class="w">13</td>${rm('80,990.00', 'w')}<td class="g"></td><td class="w">2</td>${rm('18,000.00', 'w')}<td class="g"></td><td class="w">11</td>${rm('66,990.00', 'k')}<td></td></tr>
  <tr class="r4"><th class="n">4</th><td></td><td class="g" colspan="10"></td><td></td></tr>
  <tr class="r5"><th class="n">5</th><td class="a"></td><td colspan="2" class="h5 cr">Description</td><td colspan="3" class="h5 bl">Purchases and Returns | Other</td><td colspan="3" class="h5 gr">Sales and Returns | Other</td><td colspan="2" class="h5 cr">Stock On Hand</td><td></td></tr>
  <tr class="r6"><th class="n">6</th><td class="a"></td>${[['Name of Stock Item', 'cr'], ['ID Number', 'cr'], ['Total Quantity', 'bl'], ['Total Purchase Cost', 'bl'], ['Average Cost', 'bl'], ['Total Quantity', 'gr'], ['Total Sales Price', 'gr'], ['Average Price', 'gr'], ['Current Stock<br>On Hand', 'cr'], ['Average Value of<br>Stock on Hand', 'cr']].map(h => `<td class="h6 ${h[1]}">${h[0]}${flt}</td>`).join('')}<td class="out"></td></tr>
  </tbody>
  <tbody class="data">${DATA.map((d, i) => `<tr><th class="n">${i + 7}</th><td class="a">Item #${i + 1}</td><td class="name b">${d[0]}</td><td class="c b">${d[1]}</td><td class="c">${d[2]}</td>${d.slice(3).map(v => rm(v)).join('')}<td class="out"></td></tr>`).join('')}
  <tr class="cut"><th class="n"></th><td class="a"></td>${'<td></td>'.repeat(10)}<td class="out"></td></tr></tbody>
</table>
<div class="mark"><svg viewBox="0 0 94 94"><path d="M52 3l36 21q10 7 0 14L53 60q-6 3-12 0L6 38q-10-7 0-14L42 3q5-3 10 0z" fill="none" stroke="currentColor" stroke-width="1"/><path d="M1 40q1 5 6 8l34 21q6 3 12 0l34-21q5-3 6-8v10q0 6-6 10L53 81q-6 3-12 0L7 60q-6-4-6-10z" fill="currentColor"/><path d="M1 54q1 5 6 8l34 20q6 3 12 0l34-20q5-3 6-8v4q0 5-6 9L53 91q-6 3-12 0L7 67q-6-4-6-9z" fill="#2e5e3e"/><g fill="currentColor"><ellipse cx="46" cy="18" rx="8" ry="5"/><ellipse cx="36" cy="38" rx="10" ry="5"/><ellipse cx="65" cy="33" rx="10" ry="5"/><path d="M44 20h5l2 11 10 3-20 5z"/></g></svg><span>SENANGShare.com</span></div>`);

/* ---------- sheet tabs ---------- */
const TABS = [['MENU', 62, '#2e74b5', '#fff', 1], ['About', 62, '#f8cbad', '#3a2a20', 1], ['Help Tips', 67, '#ffd966', '#3a3010', 1], ['Examples', 59, '#ffff00', '#222', 0], ['Vendors', 52, '#d6dce5', '#1c2430', 0], ['Customers', 64, '#e2f0d9', '#1c2a1c', 0], ['Stock Manager', 83, '#ff0000', '#fff', 0], ['Inventory Report', 92, 'linear-gradient(#f4faf1,#a9cf9c)', '#2c8a4e', 0], ['Monthly', 52, '#2f5597', '#fff', 0]];
define('sheet-tabs', `
  :host { background: #262626; }
  nav { display: flex; align-items: center; height: 18px; padding-right: 21px; font-size: 8px; overflow: hidden; }
  .arrows { display: flex; gap: 11px; width: 45px; padding-left: 10px; flex: none; }
  .tab { flex: none; height: 14px; margin-right: 4px; display: flex; align-items: center; justify-content: center; gap: 4px; font-size: 9px; font-weight: 600; white-space: nowrap; box-shadow: 0 0 0 1px #111; font-family: "Liberation Sans", var(--ui); }
  .tab[aria-current] { box-shadow: 0 0 0 1px #fff; }
  .tab:nth-of-type(9) { margin-right: 1px; }
  .item { flex: 1 0 0; text-align: center; color: #858585; border-left: 1px solid #4a4a4a; font-weight: 500; line-height: 14px; white-space: nowrap; }
  .tab + .item { border: 0; }
  .cut { flex: none; width: 26px; overflow: hidden; border-left: 1px solid #4a4a4a; border-right: 1px solid #4a4a4a; color: #484848; line-height: 14px; padding-left: 12px; white-space: nowrap; }
  .add { width: 27px; color: #999; font-size: 14px; height: 14px; border-right: 1px solid #4a4a4a; }
`, `<nav><span class="arrows">${icon('prev', 6, 8)}${icon('next', 6, 8)}</span>${TABS.map(t => `<a href="#" class="tab" ${t[0][0] === 'I' ? 'aria-current="page"' : ''} style="width:${t[1]}px;background:${t[2]};color:${t[3]}">${t[4] ? icon('lock', 7, 9) : ''}${t[0]}</a>`).join('')}${[1, 2, 3, 4, 5].map(n => `<a href="#" class="item">Item #${n}</a>`).join('')}<span class="cut">It</span><button class="add" aria-label="Add sheet">+</button></nav>`);

define('status-bar', `
  :host { background: linear-gradient(#474747, #3c3c3c); border-bottom: 1px solid #5a5a5a; }
  div { display: flex; align-items: center; height: 16px; padding: 0 17px; font-size: 9px; color: #e4e4e4; }
  .ready { width: 40px; }
  .views { margin-left: auto; display: flex; align-items: center; }
  .views button { width: 25px; height: 16px; } .views button[aria-pressed="true"] { background: #5c5c5c; }
  .z { width: 12px; font-size: 11px; font-weight: 700; color: #fff; }
  input { width: 70px; height: 12px; margin: 0 3px; }
  input::-webkit-slider-runnable-track { height: 2px; background: #8c8c8c; }
  input::-webkit-slider-thumb { appearance: none; width: 11px; height: 11px; margin-top: -5px; border-radius: 50%; background: #b4b4b4; }
  output { width: 31px; text-align: right; }
`, `<div><span class="ready">Ready</span>${icon('macro', 11, 11)}<span class="views"><button aria-label="Normal" aria-pressed="true">${icon('normal', 11, 11)}</button><button aria-label="Page layout">${icon('layout', 11, 11)}</button><button aria-label="Page breaks">${icon('breaks', 11, 11)}</button></span><span style="width:4px"></span><button class="z" aria-label="Zoom out">−</button><input type="range" min="0" max="100" value="54" aria-label="Zoom"><button class="z" aria-label="Zoom in">+</button><output>120%</output></div>`);

/* ---------- dock ---------- */
define('adobe-tile', `:host { display: flex; align-items: center; justify-content: center; width: 24px; height: 24px; flex: none; border: 1px solid var(--c); background: var(--b); color: var(--c); font: 500 14px/16px var(--head); }`, '<slot></slot>');
define('mac-dock', `
  :host { width: 606px; height: 31px; background: #17303f; border: 1px solid #2b4250; border-radius: 6px; }
  .bar { display: flex; align-items: center; height: 29px; padding: 0 2px 0 1px; }
  .apps { flex: 1; display: flex; }
  .end { display: flex; }
  .app { flex: 1; display: flex; align-items: center; justify-content: center; height: 29px; position: relative; }
  .end .app { flex: none; width: 26px; }
  .on::after { content: ""; position: absolute; bottom: 0; width: 2px; height: 2px; border-radius: 50%; background: #cfd8dd; }
  hr { width: 1px; height: 24px; border: 0; background: #3f5665; margin: 0 5px 0 6px; }
`, () => {
  const a = (n, on) => `<span class="app ${on ? 'on' : ''}">${icon(n, 22, 22)}</span>`;
  const ad = (t, c, b) => `<span class="app"><adobe-tile style="--c:${c};--b:${b}">${t}</adobe-tile></span>`;
  return `<div class="bar"><div class="apps">${a('finder', 1)}${a('siri')}${a('launchpad')}${a('opera', 1)}${a('safari')}${a('vscode')}${a('mail')}${a('libre')}${a('word')}${a('excel', 1)}${ad('Ps', '#2fb6d6', '#0c2733')}${ad('Ai', '#e8912a', '#2b1a0b')}${ad('Pr', '#d48af0', '#2b0a38')}${ad('Ae', '#c08af0', '#1e0a42')}${a('studio')}${a('notes')}${a('prefs')}${a('whatsapp')}</div><hr><div class="end">${a('anydesk')}${a('photos')}${a('folder')}</div><hr><div class="end">${a('trash')}</div></div>`;
});
</script>
</body>
</html>
